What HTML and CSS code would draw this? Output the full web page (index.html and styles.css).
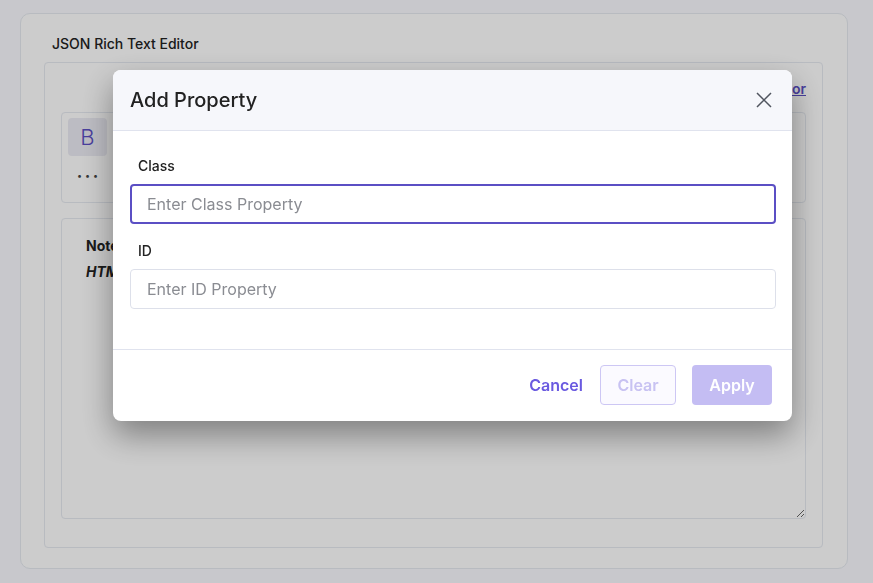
FILE: index.html
```html
<!DOCTYPE html>
<html lang="en">
<head>
<meta charset="UTF-8" />
<meta name="viewport" content="width=device-width, initial-scale=1" />
<title>JSON Rich Text Editor</title>
<link rel="stylesheet" href="styles.css">
</head>
<body>

<div class="page">
  <div class="card">
    <div class="card-title">JSON Rich Text Editor</div>
    <div class="editor-box">
      <div class="switch-row">
        <a href="#" class="switch-link">Switch to HTML Editor</a>
      </div>
      <div class="toolbar">
        <button class="tool-btn bold">B</button>
        <button class="tool-btn more">&bull;&bull;&bull;</button>
      </div>
      <div class="editor-area">
        <p class="note"><strong>Note:</strong></p>
        <p class="note"><strong><em>HTML content can be edited here</em></strong></p>
      </div>
    </div>
  </div>
</div>

<!-- Add Property modal -->
<div class="overlay">
  <div class="modal">
    <div class="modal-header">
      <h2>Add Property</h2>
      <button class="close-btn" aria-label="Close">
        <svg width="16" height="16" viewBox="0 0 16 16"><path d="M1 1 L15 15 M15 1 L1 15" stroke="#50555f" stroke-width="1.5" fill="none"/></svg>
      </button>
    </div>
    <div class="modal-body">
      <label for="class-input">Class</label>
      <input type="text" id="class-input" class="focused" placeholder="Enter Class Property" />
      <label for="id-input">ID</label>
      <input type="text" id="id-input" placeholder="Enter ID Property" />
    </div>
    <div class="modal-footer">
      <button class="btn-cancel">Cancel</button>
      <button class="btn-clear" disabled>Clear</button>
      <button class="btn-apply" disabled>Apply</button>
    </div>
  </div>
</div>

</body>
</html>
```

FILE: styles.css
```css
* {
  box-sizing: border-box;
}
body {
  margin: 0;
  font-family: Inter, "Noto Sans", sans-serif;
  background: #fafbff;
  color: #222;
}
.page {
  padding: 13px 25px 15px 20px;
}
.card {
  background: #fff;
  border: 1px solid #e6eaf1;
  border-radius: 10px;
  padding: 20px 24px 20px 23px;
}
.card-title {
  font-size: 14px;
  font-weight: 500;
  line-height: 20px;
  padding-left: 8px;
  margin-bottom: 8px;
}
.editor-box {
  border: 1px solid #e6eaf1;
  border-radius: 4px;
  padding: 15px 16px 28px 16px;
}
.switch-row {
  text-align: right;
  line-height: 20px;
  margin-bottom: 13px;
}
.switch-link {
  color: #5b4fc4;
  font-size: 14px;
  font-weight: 600;
}
.toolbar {
  border: 1px solid #e6eaf1;
  border-radius: 4px;
  padding: 5px 6px 7px;
  height: 91px;
  display: flex;
  flex-direction: column;
  align-items: flex-start;
}
.tool-btn {
  width: 39px;
  height: 38px;
  border: none;
  border-radius: 4px;
  background: transparent;
  color: #5b4fc4;
  font-family: inherit;
  font-weight: 400;
  padding: 0;
}
.tool-btn.bold {
  background: #ececf4;
  font-size: 22px;
  font-weight: 300;
}
.tool-btn.more {
  color: #444;
  font-size: 9px;
  letter-spacing: 3px;
  padding-left: 3px;
}
.editor-area {
  margin-top: 15px;
  height: 301px;
  border: 1px solid #e6eaf1;
  border-radius: 4px;
  padding: 17px 24px;
  resize: vertical;
  overflow: auto;
  font-size: 14px;
}
.note {
  margin: 0 0 6px;
  line-height: 20px;
}
/* Modal */
.overlay {
  position: fixed;
  inset: 0;
  background: rgba(0, 0, 0, 0.2);
}
.modal {
  margin: 70px 0 0 113px;
  width: 679px;
  background: #fff;
  border-radius: 8px;
  box-shadow: 0 14px 32px rgba(0, 0, 0, 0.38);
  overflow: hidden;
}
.modal-header {
  height: 61px;
  background: #f6f7fb;
  border-bottom: 1px solid #e0e3ee;
  display: flex;
  align-items: center;
  justify-content: space-between;
  padding: 0 20px 0 17px;
}
.modal-header h2 {
  margin: 0;
  font-size: 20px;
  font-weight: 500;
  color: #222;
}
.close-btn {
  border: none;
  background: none;
  padding: 0;
  width: 16px;
  height: 16px;
  display: flex;
}
.modal-body {
  padding: 25px 16px 40px 17px;
  border-bottom: 1px solid #e0e3ee;
}
.modal-body label {
  display: block;
  font-size: 14px;
  font-weight: 500;
  line-height: 20px;
  padding-left: 8px;
  margin-bottom: 8px;
}
.modal-body input {
  display: block;
  width: 100%;
  height: 40px;
  border: 1px solid #dde0ea;
  border-radius: 4px;
  padding: 0 16px;
  font-family: inherit;
  font-size: 16px;
  color: #222;
  margin-bottom: 17px;
}
.modal-body input:last-child {
  margin-bottom: 0;
}
.modal-body input.focused {
  border: 2px solid #5b4fc4;
  padding: 0 15px;
}
.modal-body input::placeholder {
  color: #8a8c92;
}
.modal-footer {
  display: flex;
  justify-content: flex-end;
  align-items: center;
  gap: 16px;
  padding: 15px 20px 16px;
}
.modal-footer button {
  height: 40px;
  font-family: inherit;
  font-size: 16px;
  font-weight: 600;
  border-radius: 4px;
}
.btn-cancel {
  border: none;
  background: none;
  color: #6a5ae0;
  padding: 0;
  margin-right: 1px;
}
.btn-clear {
  width: 76px;
  border: 1px solid #cdc7f4;
  background: #fbfaff;
  color: #c8c2f2;
}
.btn-apply {
  width: 80px;
  border: none;
  background: #c4bdf3;
  color: #fff;
}
```
